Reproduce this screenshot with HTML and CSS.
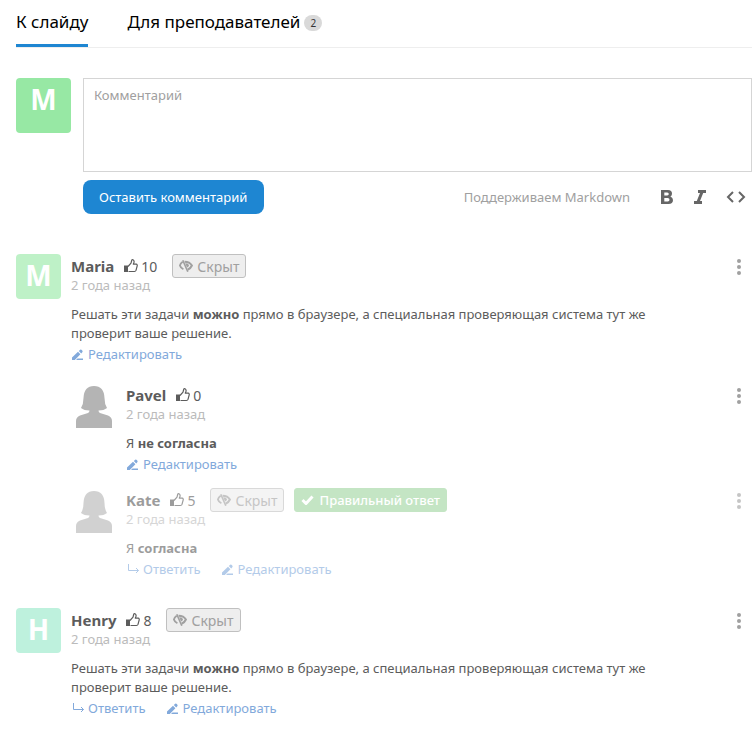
FILE: index.html
```html
<!DOCTYPE html>
<html lang="ru">
<head>
<meta charset="utf-8">
<title>Комментарии</title>
<link rel="stylesheet" href="styles.css">
</head>
<body>
<svg class="sprite" aria-hidden="true">
  <symbol id="like" viewBox="0 0 14 14">
    <path d="M0 6.500h4V13H0z" fill="currentColor"/>
    <path d="M4 7.500L7 4.200L7.700 1.500Q8 .5 9 .8Q10.400 1.500 10 3.200L9.300 5.200H12.200Q13.500 5.400 13.200 6.800L12 11.400Q11.600 12.500 10.500 12.500H4.500" fill="none" stroke="currentColor" stroke-width="1.200" stroke-linejoin="round"/>
  </symbol>
  <symbol id="hidden" viewBox="0 0 14 12">
    <path d="M3.700 1.700Q1.400 3.200.9 5.500Q1.600 7.900 4.400 9.300" fill="none" stroke="currentColor" stroke-width="1.800"/>
    <path d="M3.800.3L8.800 11.700" stroke="currentColor" stroke-width="1.600"/>
    <path d="M5.600 1.700Q10.600 1.700 12.900 5.500Q11.500 8.700 8.600 9.700" fill="none" stroke="currentColor" stroke-width="2"/>
    <path d="M6.200 3.200Q9.600 3 9.900 5.300Q9.800 6.900 8 7.600z" fill="currentColor"/>
  </symbol>
  <symbol id="pencil" viewBox="0 0 12 12">
    <path d="M0 11V8.400L6 2.800L8.400 5.200L2.800 11zM6.800 2L8.200.8Q9 .2 9.800 1L10.400 1.700Q11 2.400 10.300 3.200L9.200 4.400zM5.500 9.500H11V11H4z" fill="currentColor"/>
  </symbol>
  <symbol id="reply" viewBox="0 0 12 12">
    <path d="M1.500 0V6.500H11.500M9 4L11.500 6.500L9 9" fill="none" stroke="currentColor"/>
  </symbol>
  <symbol id="person" viewBox="0 0 36 42">
    <path d="M0 42V35Q0 31 4 29.500L12 27Q13.500 26 13.500 24.500Q8 24.500 5 22Q7.500 18 7.500 12Q8 0 18 0Q28 0 28.500 12Q28.500 18 31 22Q28 24.500 22.500 24.500Q22.500 26 24 27L32 29.500Q36 31 36 35V42z" fill="currentColor"/>
  </symbol>
  <symbol id="dots" viewBox="0 0 4 16">
    <g fill="currentColor"><circle cx="2" cy="2" r="2"/><circle cx="2" cy="8" r="2"/><circle cx="2" cy="14" r="2"/></g>
  </symbol>
</svg>

<nav class="tabs">
  <a class="tab active" href="#slide">К слайду</a>
  <a class="tab" href="#teachers">Для преподавателей <span class="count">2</span></a>
</nav>

<form class="composer">
  <div class="avatar large">M</div>
  <div class="editor">
    <textarea aria-label="Комментарий" placeholder="Комментарий"></textarea>
    <div class="toolbar">
      <button class="submit" type="button">Оставить комментарий</button>
      <span class="hint">Поддерживаем Markdown</span>
      <button class="icon-button" type="button" aria-label="Полужирный"><svg width="12" height="14" viewBox="0 0 12 14"><path fill="currentColor" fill-rule="evenodd" d="M0 0H7Q11 0 11 3.700Q11 5.600 9.400 6.500Q12 7.500 12 10Q12 14 7.500 14H0zM3.300 2.500V5.500H6.200Q7.800 5.300 7.800 4Q7.800 2.500 6.200 2.500zM3.300 8V11.500H6.700Q8.500 11.300 8.500 9.700Q8.500 8 6.700 8z"/></svg></button>
      <button class="icon-button" type="button" aria-label="Курсив"><svg width="12" height="14" viewBox="0 0 12 14"><path fill="currentColor" d="M4 0H12V3H9.200L6 11H8V14H0V11H2.800L6 3H4z"/></svg></button>
      <button class="icon-button" type="button" aria-label="Код"><svg width="20" height="12" viewBox="0 0 20 12"><path fill="none" stroke="currentColor" stroke-width="2" d="M7 1L2 6L7 11M13 1L18 6L13 11"/></svg></button>
    </div>
  </div>
</form>

<main class="comments">
  <article class="comment">
    <div class="avatar green">M</div>
    <div class="body">
      <header class="head">
        <h3 class="name">Maria</h3>
        <button class="like" type="button" aria-label="Нравится: 10"><svg class="like-icon"><use href="#like"/></svg>10</button>
        <span class="badge"><svg class="eye-icon"><use href="#hidden"/></svg>Скрыт</span>
        <button class="menu" type="button" aria-label="Меню"><svg class="dots-icon"><use href="#dots"/></svg></button>
      </header>
      <time class="date">2 года назад</time>
      <p class="text">Решать эти задачи <b>можно</b> прямо в браузере, а специальная проверяющая система тут же проверит ваше решение.</p>
      <div class="actions">
        <button class="action" type="button"><svg class="action-icon"><use href="#pencil"/></svg>Редактировать</button>
      </div>
    </div>
  </article>

  <section class="replies">
    <article class="comment">
      <svg class="person"><use href="#person"/></svg>
      <div class="body">
        <header class="head">
          <h3 class="name">Pavel</h3>
          <button class="like" type="button" aria-label="Нравится: 0"><svg class="like-icon"><use href="#like"/></svg>0</button>
          <button class="menu" type="button" aria-label="Меню"><svg class="dots-icon"><use href="#dots"/></svg></button>
        </header>
        <time class="date">2 года назад</time>
        <p class="text">Я <b>не согласна</b></p>
        <div class="actions">
          <button class="action" type="button"><svg class="action-icon"><use href="#pencil"/></svg>Редактировать</button>
        </div>
      </div>
    </article>
    <article class="comment faded">
      <svg class="person"><use href="#person"/></svg>
      <div class="body">
        <header class="head">
          <h3 class="name">Kate</h3>
          <button class="like" type="button" aria-label="Нравится: 5"><svg class="like-icon"><use href="#like"/></svg>5</button>
          <span class="badge"><svg class="eye-icon"><use href="#hidden"/></svg>Скрыт</span>
          <span class="badge correct"><svg class="check-icon" viewBox="0 0 13 10"><path d="M1.500 5L5 8.500L11.500 1.500" fill="none" stroke="currentColor" stroke-width="3"/></svg>Правильный ответ</span>
          <button class="menu" type="button" aria-label="Меню"><svg class="dots-icon"><use href="#dots"/></svg></button>
        </header>
        <time class="date">2 года назад</time>
        <p class="text">Я <b>согласна</b></p>
        <div class="actions">
          <button class="action" type="button"><svg class="action-icon"><use href="#reply"/></svg>Ответить</button>
          <button class="action" type="button"><svg class="action-icon"><use href="#pencil"/></svg>Редактировать</button>
        </div>
      </div>
    </article>
  </section>

  <article class="comment">
    <div class="avatar mint">H</div>
    <div class="body">
      <header class="head">
        <h3 class="name">Henry</h3>
        <button class="like" type="button" aria-label="Нравится: 8"><svg class="like-icon"><use href="#like"/></svg>8</button>
        <span class="badge"><svg class="eye-icon"><use href="#hidden"/></svg>Скрыт</span>
        <button class="menu" type="button" aria-label="Меню"><svg class="dots-icon"><use href="#dots"/></svg></button>
      </header>
      <time class="date">2 года назад</time>
      <p class="text">Решать эти задачи <b>можно</b> прямо в браузере, а специальная проверяющая система тут же проверит ваше решение.</p>
      <div class="actions">
        <button class="action" type="button"><svg class="action-icon"><use href="#reply"/></svg>Ответить</button>
        <button class="action" type="button"><svg class="action-icon"><use href="#pencil"/></svg>Редактировать</button>
      </div>
    </div>
  </article>
</main>
</body>
</html>
```
FILE: styles.css
```css
* { box-sizing: border-box; }

body {
  margin: 0;
  padding-left: 16px;
  background: #fff;
  color: #5c5c5c;
  font: 13px/19px "Noto Sans", "Open Sans", sans-serif;
}

button {
  padding: 0;
  border: 0;
  background: none;
  color: inherit;
  font: inherit;
  cursor: pointer;
}

svg { display: block; flex: none; }

.sprite { position: absolute; width: 0; height: 0; }

.tabs {
  display: flex;
  gap: 39px;
  height: 48px;
  border-bottom: 1px solid #eee;
}

.tab {
  display: flex;
  align-items: center;
  gap: 4px;
  height: 47px;
  padding-bottom: 1px;
  border-bottom: 3px solid transparent;
  color: #000;
  font-size: 17px;
  line-height: 24px;
  text-decoration: none;
}

.tab.active { border-color: #1e86d2; }

.count {
  margin-top: 2px;
  padding: 0 6px;
  border-radius: 8px;
  background: #d9d9d9;
  color: #333;
  font-size: 10px;
  line-height: 16px;
}

.composer {
  display: flex;
  gap: 12px;
  margin-top: 30px;
}

.avatar {
  flex: none;
  width: 45px;
  height: 45px;
  border-radius: 4px;
  color: #fff;
  font-size: 28px;
  font-weight: 700;
  line-height: 43px;
  text-align: center;
}

.avatar.large { width: 55px; height: 55px; background: #97e8a4; }
.avatar.green { background: #bef1c7; }
.avatar.mint { background: #bef1dd; }

.editor { flex: 1; min-width: 0; }

textarea {
  display: block;
  width: 100%;
  height: 94px;
  padding: 7px 10px;
  border: 1px solid #d5d5d5;
  color: #333;
  font: inherit;
  resize: none;
}

textarea::placeholder { color: #a0a0a0; }

.toolbar {
  display: flex;
  align-items: center;
  margin-top: 8px;
  color: #666;
}

.submit {
  height: 34px;
  padding: 0 17px 0 16px;
  border-radius: 8px;
  background: #1e86d2;
  color: #fff;
}

.hint { margin: 0 14px 0 auto; color: #a0a0a0; }

.icon-button {
  display: flex;
  justify-content: center;
  width: 20px;
  margin-left: 13px;
}

.icon-button:last-child { margin: 0 6px 0 16px; }

.comments {
  display: grid;
  gap: 24px;
  padding-top: 40px;
}

.comment { display: flex; gap: 10px; }

.faded { opacity: .6; }

.replies {
  display: grid;
  gap: 14px;
  margin: -5px 0 5px 60px;
}

.person {
  width: 36px;
  height: 42px;
  margin: 3px 4px 0 0;
  color: #b4b4b4;
}

.body { flex: 1; min-width: 0; }

.head { display: flex; align-items: center; height: 24px; }

.name { margin: 0 10px 0 0; font-size: 15px; font-weight: 700; }

.like { display: flex; align-items: center; gap: 3px; margin-right: 15px; font-size: 14px; }
.like-icon { width: 14px; height: 14px; }

.badge {
  display: flex;
  align-items: center;
  gap: 4px;
  height: 24px;
  margin-right: 10px;
  padding: 0 6px;
  border: 1px solid #c0c0c0;
  border-radius: 3px;
  background: #eee;
  color: #a0a0a0;
  font-size: 14px;
  white-space: nowrap;
}

.badge.correct { gap: 5px; border-color: #9dd59d; background: #9dd59d; color: #fff; font-size: 13px; font-weight: 500; }

.eye-icon { width: 14px; height: 12px; }
.check-icon { width: 13px; height: 10px; }

.menu { margin: 2px 11px 0 auto; color: #a0a0a0; }
.dots-icon { width: 4px; height: 16px; }

.date { display: block; margin-top: -2px; color: #bbb; line-height: 18px; }

.text { margin: 11px 72px 2px 0; }

.text b { font-weight: 700; }

.actions { display: flex; gap: 20px; color: #82a9db; }
.action { display: flex; align-items: center; gap: 4px; margin-left: 1px; }
.action-icon { width: 12px; height: 12px; }
```
